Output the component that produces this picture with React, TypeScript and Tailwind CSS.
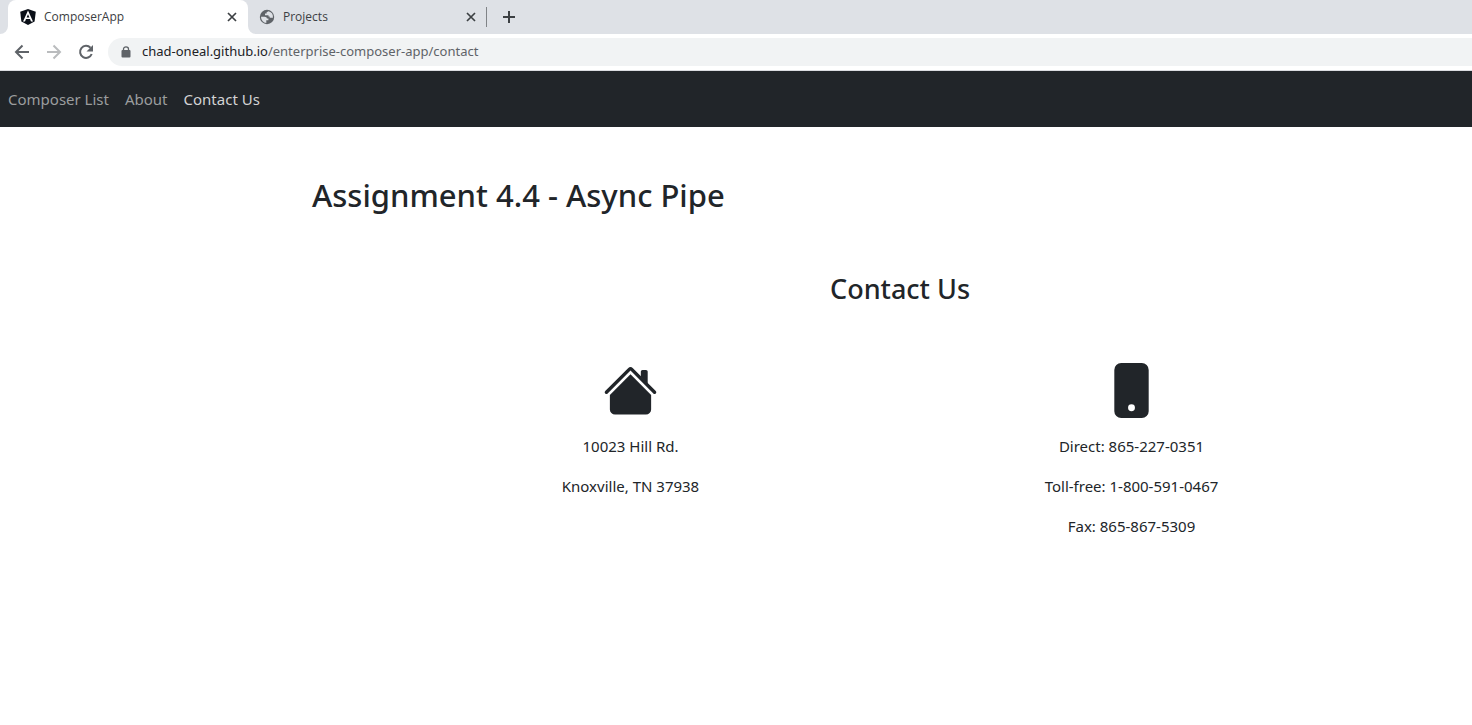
import type { ReactNode } from "react";

function CloseIcon() {
  return (
    <svg viewBox="0 0 10 10" className="size-[10px]" fill="none" stroke="#3c4043" strokeWidth="1.7" aria-hidden="true">
      <path d="M1 1l8 8M9 1L1 9" />
    </svg>
  );
}

function AngularIcon() {
  return (
    <svg viewBox="0 0 16 16" className="size-4 shrink-0" aria-hidden="true">
      <path d="M8 0L15.8 2.7 14.6 12.5 8 16 1.4 12.5 .2 2.7z" fill="#0b1018" />
      <path d="M8 1.6L3 12.600H5l1-2.500h4l1 2.500h2zM8 5.200l1.400 3.300H6.600z" fill="#fff" fillRule="evenodd" />
    </svg>
  );
}

function GlobeIcon() {
  return (
    <svg viewBox="0 0 16 16" className="size-4 shrink-0" aria-hidden="true">
      <circle cx="8" cy="8" r="7.2" fill="#5f6368" />
      <path
        d="M9.500 2.200L7.600 3.200v1.400H6v1.600h3.500v1.300h1.200v1.200h3.200A6 6 0 0 0 9.500 2.200zM2 7.800h3.600c1.500 0 2.300.7 2.300 1.800h1.500v1.600H7.300v2.700A6 6 0 0 1 2 7.800z"
        fill="#dee1e6"
      />
    </svg>
  );
}

function TabStrip() {
  return (
    <div className="flex h-[34px] bg-[#dee1e6] pl-2 font-['Open_Sans','Noto_Sans',sans-serif] text-xs text-[#3c4043]" role="tablist">
      <div className="relative flex w-60 items-center rounded-t-lg bg-white pr-[11px] pl-3">
        <svg viewBox="0 0 8 8" className="absolute bottom-0 -left-2 size-2" fill="#fff" aria-hidden="true">
          <path d="M8 0v8H0a8 8 0 0 0 8-8z" />
        </svg>
        <AngularIcon />
        <button role="tab" aria-selected="true" className="ml-2 grow text-left">ComposerApp</button>
        <button aria-label="Close ComposerApp"><CloseIcon /></button>
        <svg viewBox="0 0 8 8" className="absolute -right-2 bottom-0 size-2" fill="#fff" aria-hidden="true">
          <path d="M0 0v8h8a8 8 0 0 1-8-8z" />
        </svg>
      </div>
      <div className="flex w-[238px] items-center pr-[10px] pl-[11px]">
        <GlobeIcon />
        <button role="tab" aria-selected="false" className="ml-2 grow text-left">Projects</button>
        <button aria-label="Close Projects"><CloseIcon /></button>
      </div>
      <div className="mt-[7px] h-5 w-px bg-[#808387]" />
      <button aria-label="New tab" className="ml-4">
        <svg viewBox="0 0 12 12" className="size-3" stroke="#3c4043" strokeWidth="2" aria-hidden="true">
          <path d="M6 0v12M0 6h12" />
        </svg>
      </button>
    </div>
  );
}

function Toolbar() {
  return (
    <div className="flex h-[37px] items-center border-b border-[#dadce0] pl-[14px]">
      <button aria-label="Back">
        <svg viewBox="0 0 16 16" className="size-4" fill="none" stroke="#5f6368" strokeWidth="2" aria-hidden="true">
          <path d="M15 8H2.500M8.500 1.500L2 8l6.500 6.500" />
        </svg>
      </button>
      <button aria-label="Forward" className="ml-4">
        <svg viewBox="0 0 16 16" className="size-4" fill="none" stroke="#babcbe" strokeWidth="2" aria-hidden="true">
          <path d="M1 8h12.500M7.500 1.500L14 8l-6.500 6.500" />
        </svg>
      </button>
      <button aria-label="Reload" className="ml-4">
        <svg viewBox="0 0 16 16" className="size-4" aria-hidden="true">
          <path d="M12.500 3.800A6 6 0 1 0 13.700 10" fill="none" stroke="#5f6368" strokeWidth="2" />
          <path d="M15 1v6.500H8.500z" fill="#5f6368" />
        </svg>
      </button>
      <div className="ml-[14px] flex h-7 grow items-center rounded-l-full bg-[#f1f3f4] pl-[13px] text-[13px]">
        <svg viewBox="0 0 10 12" className="h-3 w-[10px]" aria-hidden="true">
          <path d="M2.500 5V3a2.500 2.200 0 0 1 5 0v2" fill="none" stroke="#5f6368" strokeWidth="1.300" />
          <rect x=".5" y="4" width="9" height="7.500" rx="1" fill="#5f6368" />
        </svg>
        <label htmlFor="address" className="ml-[11px] text-[#202124]">chad-oneal.github.io</label>
        <input
          id="address"
          type="text"
          defaultValue="/enterprise-composer-app/contact"
          className="min-w-0 grow bg-transparent text-[#5f6368] outline-none"
        />
      </div>
    </div>
  );
}

function ContactColumn({ icon, lines }: { icon: ReactNode; lines: string[] }) {
  return (
    <section className="flex flex-col items-center gap-4">
      <svg viewBox="0 0 16 16" className="size-[55px]" fill="currentColor" aria-hidden="true">{icon}</svg>
      {lines.map((line) => (
        <p key={line}>{line}</p>
      ))}
    </section>
  );
}

export default function App() {
  return (
    <div className="min-h-screen bg-white font-['Noto_Sans','Open_Sans',sans-serif] text-[#212529]">
      <header>
        <TabStrip />
        <Toolbar />
      </header>
      <nav className="flex h-14 items-center gap-4 bg-[#212529] px-2 text-[15px] leading-6 text-[#9b9d9e]">
        <a href="#list">Composer List</a>
        <a href="#about">About</a>
        <a href="#contact" className="text-[#d3d3d4]">Contact Us</a>
      </nav>
      <main className="pt-[49px] pl-[312px] text-[15px] leading-6">
        <h1 className="text-[31px] leading-[38px] font-medium">Assignment 4.4 - Async Pipe</h1>
        <h2 className="mt-[58px] pl-4 text-center text-[27px] leading-[34px] font-medium">Contact Us</h2>
        <div className="mt-[57px] grid grid-cols-2 pr-[90px] pl-[68px]">
          <ContactColumn
            lines={["10023 Hill Rd.", "Knoxville, TN 37938"]}
            icon={
              <>
                <path d="M8 3.293l6 6V13.500a1.500 1.500 0 0 1-1.500 1.500h-9A1.500 1.500 0 0 1 2 13.500V9.293l6-6zm5-.793V6l-2-2V2.500a.5.5 0 0 1 .5-.5h1a.5.5 0 0 1 .5.5z" />
                <path d="M7.293 1.500a1 1 0 0 1 1.414 0l6.647 6.646a.5.5 0 0 1-.708.708L8 2.207 1.354 8.854a.5.5 0 1 1-.708-.708L7.293 1.500z" />
              </>
            }
          />
          <ContactColumn
            lines={["Direct: 865-227-0351", "Toll-free: 1-800-591-0467", "Fax: 865-867-5309"]}
            icon={
              <path d="M3 2a2 2 0 0 1 2-2h6a2 2 0 0 1 2 2v12a2 2 0 0 1-2 2H5a2 2 0 0 1-2-2V2zm6 11a1 1 0 1 0-2 0 1 1 0 0 0 2 0z" />
            }
          />
        </div>
      </main>
    </div>
  );
}
